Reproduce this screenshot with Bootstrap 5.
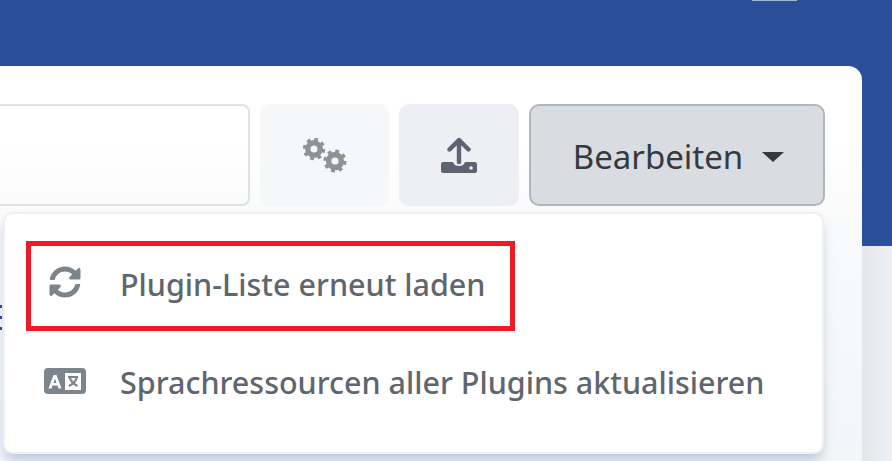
<!DOCTYPE html>
<html lang="de">
<head>
  <meta charset="UTF-8" />
  <title>Plugins</title>
  <link href="https://cdn.jsdelivr.net/npm/bootstrap@5.3.3/dist/css/bootstrap.min.css" rel="stylesheet" />
  <script src="https://cdn.jsdelivr.net/npm/bootstrap@5.3.3/dist/js/bootstrap.bundle.min.js"></script>
  <style>
    html, body { height: 100%; overflow: hidden; }
    body {
      font-family: "Noto Sans", sans-serif;
      background: linear-gradient(#2a4f9b 0 246px, transparent 246px), linear-gradient(90deg, #e4e6eb 862px, #eff0f3 892px);
    }
    .page-wrap { height: 461px; padding: 66px 30px 0 0; }
    .main-panel {
      height: 395px;
      background: linear-gradient(#fff 20%, #f9fafb 40%, #f3f5f8);
      border-radius: 0 14px 0 0;
      margin-left: -20px;
      padding: 38px 37px 0 0;
    }
    .tool-row { gap: 10px; height: 102px; }
    .search-box {
      width: 270px;
      border: 2px solid #dee2e6;
      border-radius: 0 8px 8px 0;
    }
    .tool-btn {
      height: 102px;
      border: 0;
      border-radius: 10px;
      display: flex;
      align-items: center;
      justify-content: center;
    }
    .btn-gears { width: 129px; background: #f6f7f9; color: #909296; }
    .btn-upload { width: 120px; background: #eeeff2; color: #5d6471; }
    .btn-edit {
      width: 296px;
      background: #d9dce1;
      border: 2px solid #b2b5b9;
      border-radius: 10px;
      color: #343a40;
      font-size: 33px;
      gap: 19px;
      padding: 3px 0 0 3px;
    }
    .caret-down {
      border-top: 10px solid #343a40;
      border-left: 11px solid transparent;
      border-right: 11px solid transparent;
      margin-top: 1px;
    }
    .menu-box {
      position: absolute;
      left: 3px;
      top: 212px;
      width: 821px;
      height: 242px;
      background: #fff;
      border: 2px solid #eef0f2;
      border-radius: 10px;
      padding-top: 22px;
      box-shadow: 0 8px 12px -2px rgba(42, 79, 155, .28);
      color: #5f666d;
      font-size: 30.5px;
      font-weight: 500;
    }
    .menu-row {
      height: 98px;
      display: flex;
      align-items: center;
      padding-left: 39px;
    }
    .menu-ico { width: 76px; flex: none; display: flex; color: #7c858c; }
    .ico-sync { padding-left: 5px; margin-top: -6px; }
    .ico-lang { margin-top: -4px; }
    .mark-box {
      position: absolute;
      left: 26px;
      top: 241px;
      width: 489px;
      height: 90px;
      border: 5px solid #ed1c24;
    }
    .top-tick {
      position: absolute;
      left: 752px;
      top: 0;
      width: 45px;
      height: 1px;
      background: #a4b3d3;
    }
    .edge-dots {
      position: absolute;
      left: 0;
      top: 305px;
      width: 2px;
      height: 26px;
      background: repeating-linear-gradient(#2a4f9b 0 3px, transparent 3px 11px);
    }
  </style>
</head>
<body>
  <div class="top-tick"></div>
  <div class="page-wrap">
    <div class="main-panel">
      <div class="d-flex justify-content-end tool-row">
        <div class="search-box"></div>
        <button type="button" class="tool-btn btn-gears">
          <svg width="44" height="35" viewBox="0 0 44 35" fill="none" stroke="currentColor">
            <circle cx="11" cy="11" r="6.200" stroke-width="5.400"/>
            <circle cx="11" cy="11" r="9.500" stroke-width="3.400" stroke-dasharray="3.700 3.760"/>
            <circle cx="32" cy="23" r="6.400" stroke-width="5.600"/>
            <circle cx="32" cy="23" r="9.800" stroke-width="3.400" stroke-dasharray="3.800 3.900"/>
          </svg>
        </button>
        <button type="button" class="tool-btn btn-upload">
          <svg width="36" height="36" viewBox="0 0 36 36" fill="none">
            <path fill="currentColor" d="M2 25h10c1 3 3 4 6 4s5-1 6-4h10c1 0 2 1 2 2v7c0 1-1 2-2 2H2c-1 0-2-1-2-2v-7c0-1 1-2 2-2z"/>
            <circle cx="30" cy="31" r="1.800" fill="#eeeff2"/>
            <path stroke="currentColor" stroke-width="4.400" stroke-linecap="round" stroke-linejoin="round" d="M18 25V3M8.500 12.500l9.500-9.500 9.500 9.500"/>
          </svg>
        </button>
        <button type="button" class="tool-btn btn-edit">Bearbeiten <span class="caret-down"></span></button>
      </div>
    </div>
  </div>

  <div class="edge-dots"></div>
  <div class="menu-box">
    <div class="menu-row">
      <span class="menu-ico ico-sync">
        <svg width="32" height="32" viewBox="0 0 512 512" fill="currentColor">
          <path d="M370.720 133.280C339.458 104.008 298.888 87.962 255.848 88c-77.458.068-144.328 53.178-162.791 126.850-1.344 5.363-6.122 9.150-11.651 9.150H24.103c-7.498 0-13.194-6.807-11.807-14.176C33.933 94.924 134.813 8 256 8c66.448 0 126.791 26.136 171.315 68.685L463.030 40.970C478.149 25.851 504 36.559 504 57.941V192c0 13.255-10.745 24-24 24H345.941c-21.382 0-32.090-25.851-16.971-40.971l41.750-41.749zM32 296h134.059c21.382 0 32.090 25.851 16.971 40.971l-41.750 41.750c31.262 29.273 71.835 45.319 114.876 45.280 77.418-.07 144.315-53.144 162.787-126.849 1.344-5.363 6.122-9.150 11.651-9.150h57.304c7.498 0 13.194 6.807 11.807 14.176C478.067 417.076 377.187 504 256 504c-66.448 0-126.791-26.136-171.315-68.685L48.970 471.030C33.851 486.149 8 475.441 8 454.059V320c0-13.255 10.745-24 24-24z"/>
        </svg>
      </span>
      <span>Plugin-Liste erneut laden</span>
    </div>
    <div class="menu-row">
      <span class="menu-ico ico-lang">
        <svg width="42" height="26" viewBox="0 0 42 26">
          <rect width="42" height="26" rx="4" fill="currentColor"/>
          <rect x="21" y="5" width="16" height="17" fill="#fff"/>
          <path fill="#fff" fill-rule="evenodd" d="M9.500 7h3l5 13.500h-3l-1-3h-5l-1 3h-3zM9.500 15h3l-1.500-4.500z"/>
          <path fill="none" stroke="currentColor" stroke-width="2.200" d="M24 9h10M25.500 9c1 4 4 7 8 9M33 9c-1 4-4 7-8 9"/>
        </svg>
      </span>
      <span>Sprachressourcen aller Plugins aktualisieren</span>
    </div>
  </div>
  <div class="mark-box"></div>
</body>
</html>
